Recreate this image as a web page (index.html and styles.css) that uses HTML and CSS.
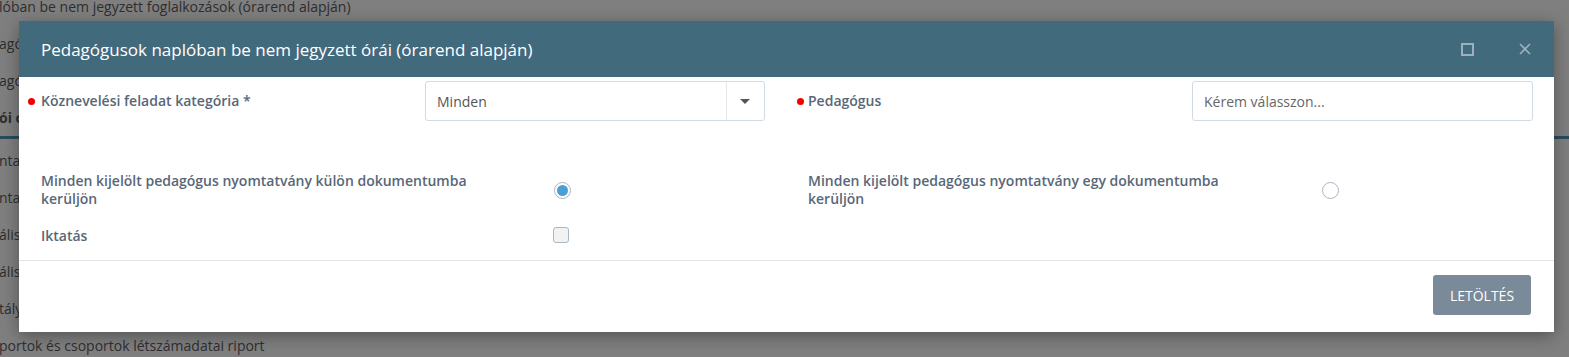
FILE: index.html
```html
<!DOCTYPE html>
<html lang="hu">

<head>
  <meta charset="UTF-8" />
  <meta name="viewport" content="width=device-width, initial-scale=1.0" />
  <title>Pedagógusok naplóban be nem jegyzett órái</title>
  <link rel="stylesheet" href="styles.css">
</head>

<body>
  <ul class="report-list">
    <li>lóban be nem jegyzett foglalkozások (órarend alapján)</li>
    <li>agó</li>
    <li>agó</li>
    <li class="group-title">ói c</li>
    <li>ntar</li>
    <li>ntar</li>
    <li>ális</li>
    <li>ális</li>
    <li>tály</li>
    <li>portok és csoportok létszámadatai riport</li>
  </ul>

  <div class="modal">
    <div class="modal-header">
      <span class="modal-title">Pedagógusok naplóban be nem jegyzett órái (órarend alapján)</span>
      <span class="modal-tools">
        <span class="icon-max"></span>
        <svg class="icon-close" width="12" height="12" viewBox="0 0 12 12">
          <path d="M1 1 L11 11 M11 1 L1 11" stroke="#9bb1bd" stroke-width="1.6" fill="none" />
        </svg>
      </span>
    </div>

    <div class="modal-body">
      <div class="field-row">
        <label class="field-label required">Köznevelési feladat kategória *</label>
        <div class="select-box">
          <span class="select-value">Minden</span>
          <span class="select-arrow"></span>
        </div>
        <span></span>
        <label class="field-label required">Pedagógus</label>
        <div class="text-input">Kérem válasszon...</div>
      </div>

      <div class="option-row first">
        <label class="field-label wrap">Minden kijelölt pedagógus nyomtatvány külön dokumentumba kerüljön</label>
        <span class="radio checked"></span>
        <label class="field-label wrap">Minden kijelölt pedagógus nyomtatvány egy dokumentumba kerüljön</label>
        <span class="radio"></span>
      </div>

      <div class="option-row">
        <label class="field-label">Iktatás</label>
        <span class="checkbox"></span>
      </div>
    </div>

    <div class="modal-footer">
      <button class="download-button">Letöltés</button>
    </div>
  </div>
</body>

</html>
```

FILE: styles.css
```css
body {
  margin: 0;
  height: 357px;
  overflow: hidden;
  background-color: #7f7f7f;
  font-family: "Open Sans", "Liberation Sans", sans-serif;
  position: relative;
}

.report-list {
  list-style: none;
  margin: -12px 0 0 -1px;
  padding: 0;
  color: #2e2e2e;
  font-size: 14px;
}

.report-list li {
  height: 37px;
  line-height: 37px;
  white-space: nowrap;
}

.group-title {
  font-weight: 700;
  border-bottom: 3px solid #2a4a5c;
  margin-bottom: 3px;
}

.modal {
  position: absolute;
  left: 19px;
  top: 21px;
  width: 1535px;
  height: 311px;
  background-color: #ffffff;
  box-shadow: 0 4px 16px rgba(0, 0, 0, 0.35);
}

.modal-header {
  height: 56px;
  background-color: #426a7d;
  display: flex;
  align-items: center;
  justify-content: space-between;
  padding: 0 22px;
}

.modal-title {
  color: #ffffff;
  font-size: 17px;
}

.modal-tools {
  display: flex;
  align-items: center;
  gap: 45px;
  margin-right: 1px;
}

.icon-max {
  width: 9px;
  height: 9px;
  border: 2px solid #9bb1bd;
}

.modal-body {
  padding: 4px 21px 15px 22px;
  border-bottom: 1px solid #e3e3e3;
}

.field-label {
  color: #586778;
  font-size: 14px;
  font-weight: 600;
  line-height: 18px;
  position: relative;
}

.required::before {
  content: "";
  position: absolute;
  left: -13px;
  top: 6px;
  width: 7px;
  height: 7px;
  border-radius: 50%;
  background-color: #f20000;
}

.field-row {
  display: grid;
  grid-template-columns: 384px 340px 43px 384px 1fr;
  align-items: center;
  height: 40px;
}

.field-row .field-label:last-of-type::before {
  left: -11px;
}

.select-box,
.text-input {
  height: 38px;
  border: 1px solid #d3dbe2;
  border-radius: 3px;
  display: flex;
  align-items: center;
  font-size: 14px;
  color: #555555;
}

.select-value {
  flex: 1;
  padding-left: 11px;
}

.select-arrow {
  width: 37px;
  height: 38px;
  border-left: 1px solid #e4e8ec;
  position: relative;
}

.select-arrow::after {
  content: "";
  position: absolute;
  left: 13px;
  top: 17px;
  border-left: 5px solid transparent;
  border-right: 5px solid transparent;
  border-top: 5px solid #555555;
}

.text-input {
  padding-left: 11px;
  color: #666666;
}

.option-row {
  display: grid;
  grid-template-columns: 513px 254px 514px 1fr;
  align-items: center;
  margin-top: 19px;
}

.option-row.first {
  margin-top: 51px;
}

.wrap {
  max-width: 450px;
}

.radio {
  width: 15px;
  height: 15px;
  border: 1px solid #a9b6c4;
  border-radius: 50%;
  background-color: #ffffff;
  position: relative;
}

.radio.checked::after {
  content: "";
  position: absolute;
  left: 2px;
  top: 2px;
  width: 11px;
  height: 11px;
  border-radius: 50%;
  background-color: #4a9fd6;
}

.checkbox {
  width: 14px;
  height: 14px;
  border: 1px solid #a9b6c4;
  border-radius: 3px;
  background-color: #f2f2f2;
  margin-left: -1px;
  margin-top: -2px;
}

.modal-footer {
  display: flex;
  justify-content: flex-end;
  padding: 14px 23px 0 0;
}

.download-button {
  height: 40px;
  width: 98px;
  background-color: #7a8a99;
  color: #ffffff;
  border: none;
  border-radius: 3px;
  font-family: inherit;
  font-size: 14px;
  text-transform: uppercase;
  cursor: pointer;
}

.download-button:hover {
  background-color: #6b7b8a;
}
```
